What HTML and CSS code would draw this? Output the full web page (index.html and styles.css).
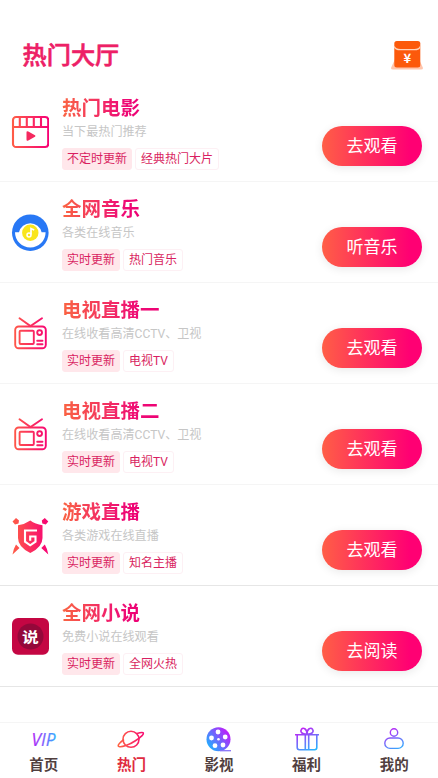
FILE: index.html
```html
<!DOCTYPE html>
<html lang="zh-CN">
<head>
<meta charset="utf-8">
<title>热门大厅</title>
<link rel="stylesheet" href="styles.css">
</head>
<body>
<svg class="defs" aria-hidden="true">
  <defs>
    <linearGradient id="warm" gradientUnits="userSpaceOnUse" x1="0" y1="0" x2="38" y2="0"><stop offset="0" stop-color="#ff6044"/><stop offset="1" stop-color="#f70076"/></linearGradient>
    <linearGradient id="cool" gradientUnits="userSpaceOnUse" x1="8" y1="2" x2="20" y2="26"><stop offset="0" stop-color="#c51cf5"/><stop offset="1" stop-color="#20bdff"/></linearGradient>
    <linearGradient id="reel" gradientUnits="userSpaceOnUse" x1="24" y1="4" x2="3" y2="20"><stop offset="0" stop-color="#c913fa"/><stop offset="1" stop-color="#22adff"/></linearGradient>
    <linearGradient id="vip" gradientUnits="userSpaceOnUse" x1="1" y1="0" x2="27" y2="0"><stop offset="0" stop-color="#b51df5"/><stop offset=".55" stop-color="#7865ff"/><stop offset="1" stop-color="#28b9ff"/></linearGradient>
    <linearGradient id="planet" gradientUnits="userSpaceOnUse" x1="0" y1="0" x2="27" y2="0"><stop offset="0" stop-color="#ff6740"/><stop offset="1" stop-color="#f80a72"/></linearGradient>
    <symbol id="tv" viewBox="0 0 38 38">
      <g fill="none" stroke="url(#warm)" stroke-width="1.9" stroke-linecap="round">
        <path d="M8.500 3.200 19.500 11 31 3.200"/>
        <rect x="4.200" y="11.500" width="30.600" height="21.800" rx="3.500"/>
        <rect x="8.600" y="15.800" width="14.200" height="13.200" rx="1"/>
        <circle cx="28.600" cy="17.600" r="2.400"/>
        <path d="M26.200 25.700h5.300M26.200 29.200h5.300"/>
      </g>
    </symbol>
  </defs>
</svg>
<header class="top">
  <h1>热门大厅</h1>
  <svg class="packet" width="34" height="32" viewBox="0 0 34 32">
    <path d="M5 20 1 29q0 1.500 2 1.500h28q2 0 2-1.500l-4-9z" fill="#ffc5ac"/>
    <rect x="4.300" y="2" width="26" height="26.500" rx="2.500" fill="#fc590b"/>
    <path d="M4.300 7.500q1 3.200 6 3.200h14q5 0 6-3.200" fill="none" stroke="#ffd2ba" stroke-width="1.300"/>
    <text class="yen" x="17.300" y="23.500" text-anchor="middle">¥</text>
  </svg>
</header>
<main>
  <section class="row">
    <svg class="icon" viewBox="0 0 38 38">
      <g fill="none" stroke="url(#warm)" stroke-width="2.100">
        <rect x="2" y="4" width="35.200" height="30" rx="3"/>
        <path d="M2 14h35.200M8.800 4v9.500M15.800 4v9.500M22.800 4v9.500M30 4v9.500"/>
      </g>
      <path d="M15.500 19.500q0-2 1.800-1l6.700 3.800q1 .7 0 1.400l-6.700 3.800q-1.800 1-1.800-1z" fill="#f5295f"/>
    </svg>
    <div class="info"><h2>热门电影</h2><p>当下最热门推荐</p><div class="tags"><span class="tag solid">不定时更新</span><span class="tag">经典热门大片</span></div></div>
    <button>去观看</button>
  </section>
  <section class="row">
    <svg class="icon" viewBox="0 0 38 38">
      <circle cx="19.300" cy="18.700" r="18.300" fill="#2878f5"/>
      <path d="M4 18.300h4a11.600 11.600 0 0 1 22.600 0h4a15.300 15.300 0 0 1-30.600 0z" fill="#fff"/>
      <circle cx="19.300" cy="18.700" r="8.200" fill="#f9e51c"/>
      <path d="M20 20.500v-6l3.200 1.500" fill="none" stroke="#fff" stroke-width="1.700"/><circle cx="18" cy="21" r="2" fill="none" stroke="#fff" stroke-width="1.500"/>
    </svg>
    <div class="info"><h2>全网音乐</h2><p>各类在线音乐</p><div class="tags"><span class="tag solid">实时更新</span><span class="tag">热门音乐</span></div></div>
    <button>听音乐</button>
  </section>
  <section class="row">
    <svg class="icon" viewBox="0 0 38 38"><use href="#tv"/></svg>
    <div class="info"><h2>电视直播一</h2><p>在线收看高清CCTV、卫视</p><div class="tags"><span class="tag solid">实时更新</span><span class="tag">电视TV</span></div></div>
    <button>去观看</button>
  </section>
  <section class="row">
    <svg class="icon" viewBox="0 0 38 38"><use href="#tv"/></svg>
    <div class="info"><h2>电视直播二</h2><p>在线收看高清CCTV、卫视</p><div class="tags"><span class="tag solid">实时更新</span><span class="tag">电视TV</span></div></div>
    <button>去观看</button>
  </section>
  <section class="row strong">
    <svg class="icon" viewBox="0 0 38 38">
      <g fill="url(#warm)">
        <path d="M19.300 3.500q5 3.800 12.200 4.700V21q0 9-12.200 15Q7 30 7 21V8.200q7-.9 12.300-4.700z"/>
        <path d="M1.500 4.500 5 1l3 2.500-.5 3L4 7.500zM37.300 4.500 33.800 1l-3 2.500.5 3 3.500 1zM5 27.500l3.500 3.500-7 6.500q1-6 3.500-10zM33.800 27.500 30.300 31l7 6.500q-1-6-3.500-10z"/>
      </g>
      <path d="M26 13.500H14v11.200l5.200 3.600 5.300-3.600v-5.200h-5.300v4.200" fill="none" stroke="#fff" stroke-width="2.100"/>
    </svg>
    <div class="info"><h2>游戏直播</h2><p>各类游戏在线直播</p><div class="tags"><span class="tag solid">实时更新</span><span class="tag">知名主播</span></div></div>
    <button>去观看</button>
  </section>
  <section class="row strong">
    <svg class="icon" viewBox="0 0 38 38">
      <rect x="1" y="0" width="37" height="36.700" rx="6" fill="#c40643"/>
      <circle cx="19.500" cy="18.500" r="13" fill="#94083a"/>
      <text class="book" x="0" y="0" text-anchor="middle" transform="translate(19.500 23.500) scale(1.120 .9)">说</text>
    </svg>
    <div class="info"><h2>全网小说</h2><p>免费小说在线观看</p><div class="tags"><span class="tag solid">实时更新</span><span class="tag">全网火热</span></div></div>
    <button>去阅读</button>
  </section>
</main>
<nav>
  <a><svg viewBox="0 0 28 28"><text class="vip" x="1.500" y="20" textLength="24" lengthAdjust="spacingAndGlyphs">VIP</text></svg><span>首页</span></a>
  <a class="active"><svg viewBox="0 0 28 28"><g fill="none" stroke="url(#planet)" stroke-width="1.600"><circle cx="14" cy="13.300" r="8"/><path d="M7 13.500C2 17 0 20 2 20.600c3 .8 10-1.600 16-5.600 6-3.800 9.500-7 8-8.300-.8-.6-3-.2-6 .8"/></g></svg><span>热门</span></a>
  <a><svg viewBox="0 0 28 28"><circle cx="13.500" cy="13.300" r="12" fill="url(#reel)"/><path d="M15 24.700h11" stroke="#8872f8" stroke-width="1.300"/><g fill="#fff"><circle cx="13.500" cy="13.300" r="1.300"/><circle cx="13" cy="6" r="2.400"/><circle cx="20.200" cy="11" r="2.400"/><circle cx="18" cy="19" r="2.400"/><circle cx="10" cy="19.700" r="2.400"/><circle cx="6.500" cy="12" r="2.400"/></g></svg><span>影视</span></a>
  <a><svg viewBox="0 0 28 28"><g fill="none" stroke="url(#cool)" stroke-width="1.600"><path d="M2 8.800h24M4.200 8.800v12.700q0 2.200 2.200 2.200h15.200q2.200 0 2.200-2.200V8.800M12.300 8.800v15M15.700 8.800v15"/><path d="M14 8.300C8 8.300 7 5.300 8.500 3.300S14 2.300 14 8.300c0-6 4-7 5.500-5s.5 5-5.500 5z"/></g></svg><span>福利</span></a>
  <a><svg viewBox="0 0 28 28"><g fill="none" stroke="url(#cool)" stroke-width="1.400"><circle cx="14" cy="6.500" r="3.700"/><rect x="4.800" y="12" width="18.400" height="10.400" rx="5.200"/></g></svg><span>我的</span></a>
</nav>
</body>
</html>
```
FILE: styles.css
```css
* { box-sizing: border-box; }
body {
  margin: 0;
  height: 778px;
  display: flex;
  flex-direction: column;
  overflow: hidden;
  background: #fff;
  font-family: Roboto, "Noto Sans CJK SC", sans-serif;
}
.defs { position: absolute; width: 0; height: 0; }
h1, h2, p { margin: 0; }
.top {
  height: 81px;
  padding: 27px 14px 0 22.5px;
  display: flex;
  justify-content: space-between;
  align-items: flex-start;
}
h1 { color: #ed2066; font-size: 24.2px; line-height: 58px; font-weight: 500; -webkit-text-stroke: .6px #ed2066; }
.packet { margin-top: 12px; }
.yen { fill: #fff; font: bold 13px "Noto Sans CJK SC", sans-serif; }
.row {
  height: 101px;
  display: flex;
  padding: 0 16px 0 11px;
  border-bottom: 1px solid #f5f5f5;
}
.row.strong { border-color: #e6e6e6; }
.icon { width: 38px; height: 38px; margin-top: 32px; flex: none; }
.info { flex: 1; margin-left: 13px; padding-top: 13.500px; }
h2 {
  width: max-content;
  font-size: 19.5px;
  line-height: 28px;
  font-weight: 700;
  color: transparent;
  background: linear-gradient(90deg, #fa6542, #ef0e75 75%, #ed0074);
  -webkit-background-clip: text;
  background-clip: text;
}
p { color: #c6c6c6; font-size: 12.1px; line-height: 19px; }
.tags { display: flex; gap: 3px; margin-top: 6.500px; }
.tag {
  height: 22px;
  padding: 0 5px;
  border: 1px solid #fdf0f4;
  border-radius: 3px;
  color: #d91f61;
  font-size: 12px;
  line-height: 20px;
  white-space: nowrap;
}
.tag.solid { padding: 0 4px; background: #ffe7eb; border-color: #ffe7eb; }
button {
  width: 100px;
  height: 40px;
  margin: 45px 0 0;
  padding: 0 0 2px;
  border: 0;
  border-radius: 20px;
  background: linear-gradient(90deg, #ff5e46, #ff0073 88%);
  box-shadow: 0 2px 10px rgba(0, 0, 0, .09);
  color: #fff;
  font: 17px/38px "Noto Sans CJK SC", sans-serif;
}
.book { fill: #fff; font: 700 15px "Noto Sans CJK SC", sans-serif; }
nav {
  height: 56px;
  margin-top: auto;
  border-top: 1px solid #f5f5f5;
  display: grid;
  grid-template-columns: repeat(5, 1fr);
}
nav a {
  display: flex;
  flex-direction: column;
  align-items: center;
  padding-top: 3px;
  color: #51403f;
  font-size: 14.5px;
  line-height: 23px;
  font-weight: 700;
}
nav svg { width: 28px; height: 28px; }
nav .active { color: #e02b40; }
.vip { fill: url(#vip); stroke: url(#vip); stroke-width: .2px; font: italic 400 18px "Open Sans", sans-serif; }
```
